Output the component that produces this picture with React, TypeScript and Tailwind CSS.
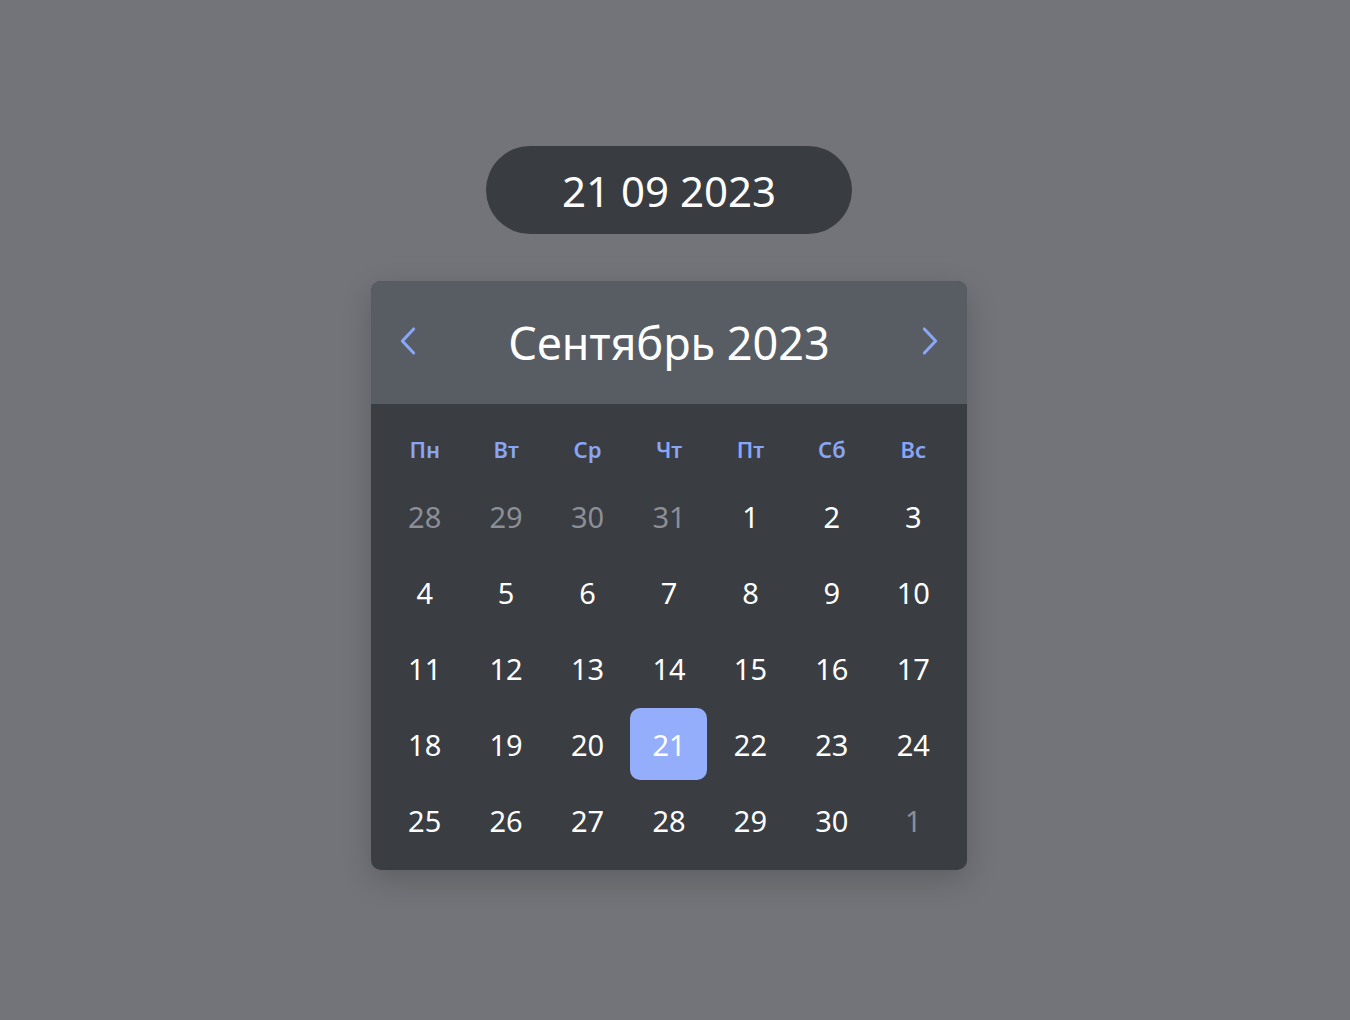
import React from "react";

const weekdays = ["Пн", "Вт", "Ср", "Чт", "Пт", "Сб", "Вс"];
const days: { d: number; muted?: boolean; sel?: boolean }[] = [
  { d: 28, muted: true }, { d: 29, muted: true }, { d: 30, muted: true }, { d: 31, muted: true },
  ...Array.from({ length: 30 }, (_, i) => ({ d: i + 1, sel: i + 1 === 21 })),
  { d: 1, muted: true },
];

export default function App() {
  return (
    <div
      className="w-[1350px] h-[1020px] bg-[#727479] flex flex-col items-center pr-[12px]"
      style={{ fontFamily: '"Noto Sans", "Open Sans", sans-serif' }}
    >
      <div className="mt-[146px] w-[366px] h-[88px] rounded-full bg-[#393c41] flex items-center justify-center text-white text-[42px] leading-none">
        <span className="mt-[2px]">21 09 2023</span>
      </div>
      <div className="mt-[47px] w-[596px] rounded-[10px] overflow-hidden bg-[#3a3d42] shadow-[0_10px_30px_rgba(0,0,0,0.18)]">
        <div className="h-[123px] bg-[#585c63] flex items-center justify-between px-[22px]">
          <svg width="32" height="32" viewBox="0 0 24 24" fill="none" stroke="#8aa6f7" strokeWidth="2.3" strokeLinecap="round" strokeLinejoin="round" className="-mt-[4px]">
            <path d="M15.5 3l-8.5 9 8.5 9" />
          </svg>
          <span className="text-white text-[45px] leading-none">Сентябрь 2023</span>
          <svg width="32" height="32" viewBox="0 0 24 24" fill="none" stroke="#8aa6f7" strokeWidth="2.3" strokeLinecap="round" strokeLinejoin="round" className="-mt-[4px]">
            <path d="M8.5 3l8.5 9-8.5 9" />
          </svg>
        </div>
        <div className="px-[13px] pt-[24px] pb-[10px]">
          <div className="grid grid-cols-7 h-[44px] mb-[8px]">
            {weekdays.map((w) => (
              <div key={w} className="flex items-center justify-center text-[#89a5f5] text-[22px] font-semibold">
                <span className="-mt-[2px]">{w}</span>
              </div>
            ))}
          </div>
          <div className="grid grid-cols-7 auto-rows-[76px]">
            {days.map((x, i) => (
              <div key={i} className="flex items-start justify-center">
                <div
                  className={
                    "w-[77px] h-[72px] flex items-center justify-center text-[29px] rounded-[10px] " +
                    (x.sel ? "bg-[#94aefb] text-white" : x.muted ? "text-[#8c8f95]" : "text-white")
                  }
                >
                  <span className="mt-[2px]">{x.d}</span>
                </div>
              </div>
            ))}
          </div>
        </div>
      </div>
    </div>
  );
}
